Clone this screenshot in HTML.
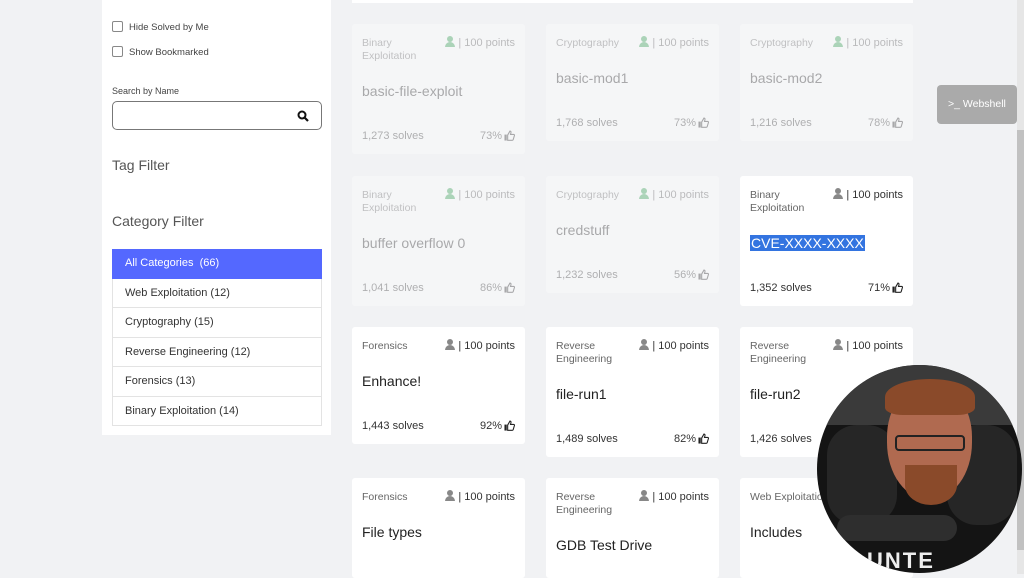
<!DOCTYPE html>
<html><head><style>
*{box-sizing:border-box;margin:0;padding:0}
body{width:1024px;height:574px;overflow:hidden;background:#f1f2f4;font-family:"Liberation Sans",sans-serif;position:relative;color:#333}
.side{position:absolute;left:102px;top:0;width:229px;height:435px;background:#fff}
.cb{position:absolute;left:112px;font-size:9.5px;color:#444}
.cb i{display:inline-block;width:11px;height:11px;border:1px solid #888;border-radius:2px;vertical-align:-2px;margin-right:6px}
.search{position:absolute;left:112px;top:101px;width:210px;height:29px;border:1px solid #777;border-radius:5px}
.h{position:absolute;left:112px;font-size:14px;color:#555}
.cat{position:absolute;left:112px;top:249px;width:210px}
.cat div{height:29.5px;border:1px solid #e3e3e3;border-top:none;font-size:11px;padding:8px 12px;color:#333}
.cat div.a{background:#5468ff;color:#fff;border-color:#5468ff}
.card{position:absolute;width:173px;background:#fff;border-radius:3px}
.card .c{position:absolute;left:10px;top:13px;font-size:10.5px;color:#666;line-height:13px;width:80px}
.card .p{position:absolute;right:10px;top:12px;font-size:11px;color:#333}
.card .t{position:absolute;left:10px;font-size:14px;color:#222}
.card .s{position:absolute;left:10px;font-size:11px;color:#333}
.card .r{position:absolute;right:10px;font-size:11px;color:#333}
.card .r svg{vertical-align:-2px;margin-left:2px}
.f{opacity:.35}
.f .p{color:#555}
.u{display:inline-block;width:10px;height:11px;position:relative;vertical-align:-1px;margin-right:3px}
.u:before{content:"";position:absolute;left:2px;top:0;width:6px;height:6px;border-radius:50%;background:#888}
.u:after{content:"";position:absolute;left:0;top:6px;width:10px;height:5px;border-radius:5px 5px 0 0;background:#888}
.f .u:before,.f .u:after{background:#2a9a4a}
</style></head><body>
<svg width="0" height="0" style="position:absolute"><defs><symbol id="th" viewBox="0 0 12 12"><rect x="0.5" y="5" width="2.5" height="6.5" fill="#222"/><path d="M4 5.5L6.5 1.2C7.6 1.2 7.8 2 7.5 3.3L7.1 4.8H10.5C11.3 4.8 11.6 5.5 11.3 6.3L10 10.6C9.8 11.1 9.4 11.3 8.9 11.3H4Z" fill="none" stroke="#222" stroke-width="1.2"/></symbol></defs></svg>
<div style="position:absolute;left:352px;top:0;width:561px;height:3px;background:#fff"></div>
<div class="side"></div>
<div class="cb" style="top:21px"><i></i>Hide Solved by Me</div>
<div class="cb" style="top:46px"><i></i>Show Bookmarked</div>
<div class="cb" style="top:86px;font-size:9px">Search by Name</div>
<div class="search"><svg width="12" height="12" style="position:absolute;right:12px;top:8px" viewBox="0 0 12 12"><circle cx="5" cy="5" r="3.5" fill="none" stroke="#111" stroke-width="2"/><path d="M7.5 7.5L11 11" stroke="#111" stroke-width="2.2"/></svg></div>
<div class="h" style="top:157px">Tag Filter</div>
<div class="h" style="top:213px">Category Filter</div>
<div class="cat">
<div class="a">All Categories &nbsp;(66)</div>
<div>Web Exploitation (12)</div>
<div>Cryptography (15)</div>
<div>Reverse Engineering (12)</div>
<div>Forensics (13)</div>
<div>Binary Exploitation (14)</div>
</div>

<div class="card f" style="left:352px;top:24px;height:130px"><div class="c">Binary Exploitation</div><div class="p"><span class="u"></span>| 100 points</div><div class="t" style="top:59px">basic-file-exploit</div><div class="s" style="top:106px">1,273 solves</div><div class="r" style="top:106px">73%<svg width="11" height="11"><use href="#th"/></svg></div></div>
<div class="card f" style="left:546px;top:24px;height:117px"><div class="c" style="width:100px">Cryptography</div><div class="p"><span class="u"></span>| 100 points</div><div class="t" style="top:46px">basic-mod1</div><div class="s" style="top:93px">1,768 solves</div><div class="r" style="top:93px">73%<svg width="11" height="11"><use href="#th"/></svg></div></div>
<div class="card f" style="left:740px;top:24px;height:117px"><div class="c" style="width:100px">Cryptography</div><div class="p"><span class="u"></span>| 100 points</div><div class="t" style="top:46px">basic-mod2</div><div class="s" style="top:93px">1,216 solves</div><div class="r" style="top:93px">78%<svg width="11" height="11"><use href="#th"/></svg></div></div>

<div class="card f" style="left:352px;top:176px;height:130px"><div class="c">Binary Exploitation</div><div class="p"><span class="u"></span>| 100 points</div><div class="t" style="top:59px">buffer overflow 0</div><div class="s" style="top:106px">1,041 solves</div><div class="r" style="top:106px">86%<svg width="11" height="11"><use href="#th"/></svg></div></div>
<div class="card f" style="left:546px;top:176px;height:117px"><div class="c" style="width:100px">Cryptography</div><div class="p"><span class="u"></span>| 100 points</div><div class="t" style="top:46px">credstuff</div><div class="s" style="top:93px">1,232 solves</div><div class="r" style="top:93px">56%<svg width="11" height="11"><use href="#th"/></svg></div></div>
<div class="card" style="left:740px;top:176px;height:130px"><div class="c">Binary Exploitation</div><div class="p"><span class="u"></span>| 100 points</div><div class="t" style="top:59px;background:#3374e0;color:#fff;padding:0 1px">CVE-XXXX-XXXX</div><div class="s" style="top:106px">1,352 solves</div><div class="r" style="top:106px">71%<svg width="11" height="11"><use href="#th"/></svg></div></div>

<div class="card" style="left:352px;top:327px;height:117px"><div class="c">Forensics</div><div class="p"><span class="u"></span>| 100 points</div><div class="t" style="top:46px">Enhance!</div><div class="s" style="top:93px">1,443 solves</div><div class="r" style="top:93px">92%<svg width="11" height="11"><use href="#th"/></svg></div></div>
<div class="card" style="left:546px;top:327px;height:130px"><div class="c">Reverse Engineering</div><div class="p"><span class="u"></span>| 100 points</div><div class="t" style="top:59px">file-run1</div><div class="s" style="top:106px">1,489 solves</div><div class="r" style="top:106px">82%<svg width="11" height="11"><use href="#th"/></svg></div></div>
<div class="card" style="left:740px;top:327px;height:130px"><div class="c">Reverse Engineering</div><div class="p"><span class="u"></span>| 100 points</div><div class="t" style="top:59px">file-run2</div><div class="s" style="top:106px">1,426 solves</div><div class="r" style="top:106px">86%<svg width="11" height="11"><use href="#th"/></svg></div></div>

<div class="card" style="left:352px;top:478px;height:100px"><div class="c">Forensics</div><div class="p"><span class="u"></span>| 100 points</div><div class="t" style="top:46px">File types</div></div>
<div class="card" style="left:546px;top:478px;height:100px"><div class="c">Reverse Engineering</div><div class="p"><span class="u"></span>| 100 points</div><div class="t" style="top:59px">GDB Test Drive</div></div>
<div class="card" style="left:740px;top:478px;height:100px"><div class="c" style="width:120px">Web Exploitation</div><div class="t" style="top:46px">Includes</div></div>

<div style="position:absolute;left:937px;top:85px;width:80px;height:39px;background:#aaa;border-radius:4px;color:#fff;font-size:10.5px;padding:13px 0 0 11px">&gt;_ Webshell</div>
<div style="position:absolute;left:1017px;top:0;width:7px;height:574px;background:#e6e6e6"></div>
<div style="position:absolute;left:1017px;top:130px;width:7px;height:420px;background:#c1c1c1"></div>

<div style="position:absolute;left:817px;top:365px;width:205px;height:208px;border-radius:50%;background:#141414;overflow:hidden">
<div style="position:absolute;left:0;top:0;width:205px;height:60px;background:#3a3a3a"></div>
<div style="position:absolute;left:10px;top:60px;width:70px;height:100px;border-radius:30px;background:#262626"></div>
<div style="position:absolute;left:130px;top:60px;width:70px;height:100px;border-radius:30px;background:#262626"></div>
<div style="position:absolute;left:70px;top:20px;width:85px;height:115px;border-radius:45% 45% 50% 50%;background:#b06a50"></div>
<div style="position:absolute;left:68px;top:14px;width:90px;height:36px;border-radius:50% 50% 20% 20%;background:#8a4a2a"></div>
<div style="position:absolute;left:78px;top:70px;width:70px;height:16px;border:2px solid #222;border-radius:4px"></div>
<div style="position:absolute;left:88px;top:100px;width:52px;height:40px;border-radius:0 0 50% 50%;background:#8a4a2a"></div>
<div style="position:absolute;left:20px;top:150px;width:120px;height:26px;border-radius:13px;background:#2e2e2e"></div>
<div style="position:absolute;left:50px;top:183px;width:120px;height:30px;color:#eee;font-weight:bold;font-size:22px;letter-spacing:2px">UNTE</div>
</div>
</body></html>
